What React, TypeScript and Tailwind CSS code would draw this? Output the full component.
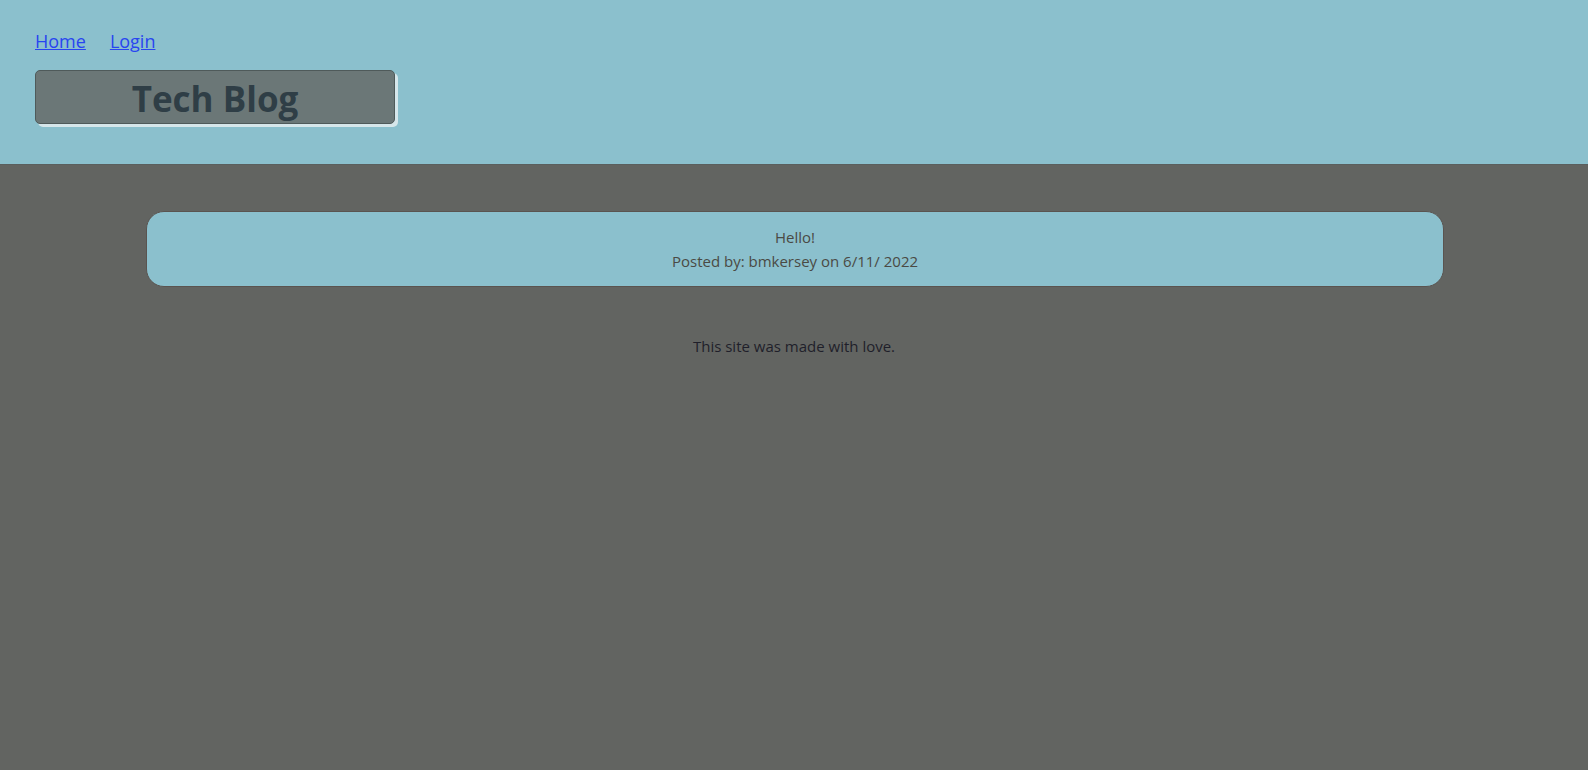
export default function App() {
  return (
    <div
      className="min-h-[770px] bg-[#626461] text-[#333]"
      style={{ fontFamily: '"Open Sans", "Noto Sans", sans-serif' }}
    >
      <header className="h-[165px] bg-[#8bc0cd] border-b border-[#5a5f5e] px-[35px] pt-[28px]">
        <nav className="flex gap-[24px] text-[18px] leading-[26px]">
          <a href="#" className="text-[#2845f0] underline">Home</a>
          <a href="#" className="text-[#2845f0] underline">Login</a>
        </nav>
        <div className="mt-[16px] w-[360px] h-[54px] rounded-[5px] border border-[#4f5a5a] bg-[#6b7777] shadow-[3px_3px_0_#d6e6ea] flex items-center justify-center">
          <h1 className="text-[35px] font-bold text-[#2f3e46] leading-none pt-[2px]">Tech Blog</h1>
        </div>
      </header>

      <main className="pl-[146px] pr-[144px] pt-[46px]">
        <div className="rounded-[18px] border border-[#5a5450] bg-[#8bc0cd] py-[13px] text-center text-[15px] leading-[24px] text-[#4a4a44]">
          <p>Hello!</p>
          <p>Posted by: bmkersey on 6/11/ 2022</p>
        </div>
      </main>

      <footer className="pt-[47px] text-center text-[15px] leading-[24px] text-[#1f1f2a]">
        This site was made with love.
      </footer>
    </div>
  );
}
